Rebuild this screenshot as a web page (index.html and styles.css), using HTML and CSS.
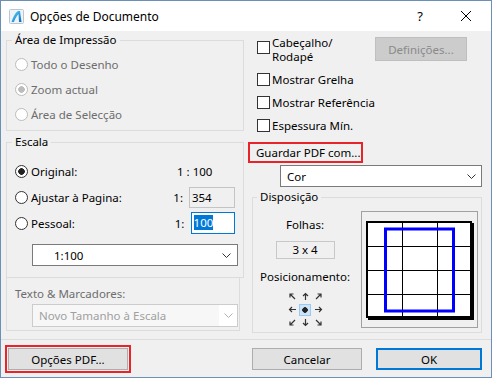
FILE: index.html
```html
<!DOCTYPE html>
<html lang="pt">
<head>
    <meta charset="UTF-8">
    <title>Opções de Documento</title>
    <link rel="stylesheet" href="styles.css">
</head>
<body>
<div class="window">
    <div class="titlebar">
        <svg class="app-icon" width="15" height="15" viewBox="0 0 15 15">
            <defs>
                <linearGradient id="ac" x1="0" y1="0" x2="1" y2="1">
                    <stop offset="0" stop-color="#5fd8f6"/>
                    <stop offset="1" stop-color="#0b68c8"/>
                </linearGradient>
            </defs>
            <rect x="0.5" y="0.5" width="14" height="14" rx="1" fill="#eef3f8" stroke="#bcc6d0"/>
            <path d="M2.5 13 C4 8 6 4 9 2 L11 2 L12.5 13 L10 13 L9.5 5 C7.5 7 6 10 5 13 Z" fill="url(#ac)"/>
        </svg>
        <span class="title">Opções de Documento</span>
        <span class="help">?</span>
        <span class="close">
            <svg width="10" height="10" viewBox="0 0 10 10"><path d="M0 0 L10 10 M10 0 L0 10" stroke="#000" stroke-width="1"/></svg>
        </span>
    </div>

    <div class="main">
        <div class="col-left">
            <fieldset class="group area">
                <legend>Área de Impressão</legend>
                <div class="radio disabled"><span class="rb"></span>Todo o Desenho</div>
                <div class="radio disabled"><span class="rb on"></span>Zoom actual</div>
                <div class="radio disabled"><span class="rb"></span>Área de Selecção</div>
            </fieldset>

            <fieldset class="group escala">
                <legend>Escala</legend>
                <div class="scale-row">
                    <div class="radio"><span class="rb on"></span>Original:</div>
                    <span class="ratio">1 : 100</span>
                </div>
                <div class="scale-row">
                    <div class="radio"><span class="rb"></span>Ajustar à Pagina:</div>
                    <span class="ratio">1:</span>
                    <span class="field readonly">354</span>
                </div>
                <div class="scale-row">
                    <div class="radio"><span class="rb"></span>Pessoal:</div>
                    <span class="ratio">1:</span>
                    <span class="field focused"><span class="sel">100</span></span>
                </div>
                <div class="select scale-select">
                    <span>1:100</span>
                    <svg class="chev" width="9" height="5" viewBox="0 0 9 5"><polyline points="0.5,0.5 4.5,4.5 8.5,0.5" fill="none" stroke="#333"/></svg>
                </div>
            </fieldset>

            <div class="texto">
                <div class="dim">Texto &amp; Marcadores:</div>
                <div class="select disabled text-select">
                    <span>Novo Tamanho à Escala</span>
                    <span class="chev-box">
                        <svg width="9" height="5" viewBox="0 0 9 5"><polyline points="0.5,0.5 4.5,4.5 8.5,0.5" fill="none" stroke="#b0b0b0"/></svg>
                    </span>
                </div>
            </div>
        </div>

        <div class="col-right">
            <div class="header-row">
                <span class="cb"></span>
                <span class="two-line">Cabeçalho/<br>Rodapé</span>
                <button class="btn settings" disabled>Definições...</button>
            </div>
            <div class="check"><span class="cb"></span>Mostrar Grelha</div>
            <div class="check"><span class="cb"></span>Mostrar Referência</div>
            <div class="check"><span class="cb"></span>Espessura Mín.</div>

            <div class="save-as">Guardar PDF com...</div>
            <div class="select color-select">
                <span>Cor</span>
                <svg class="chev" width="9" height="5" viewBox="0 0 9 5"><polyline points="0.5,0.5 4.5,4.5 8.5,0.5" fill="none" stroke="#333"/></svg>
            </div>

            <fieldset class="group disposicao">
                <legend>Disposição</legend>
                <div class="layout-side">
                    <div class="caption">Folhas:</div>
                    <div class="sheets">3 x 4</div>
                    <div class="caption pos-label">Posicionamento:</div>
                    <div class="pos-grid">
                        <span><svg width="9" height="9" viewBox="0 0 9 9"><path d="M7 7 L2 2 M2 5.5 L2 2 L5.5 2" fill="none" stroke="#333" stroke-width="1.2"/></svg></span>
                        <span><svg width="9" height="9" viewBox="0 0 9 9"><path d="M4.5 8 L4.5 1.5 M2 4 L4.5 1.5 L7 4" fill="none" stroke="#333" stroke-width="1.2"/></svg></span>
                        <span><svg width="9" height="9" viewBox="0 0 9 9"><path d="M2 7 L7 2 M3.5 2 L7 2 L7 5.5" fill="none" stroke="#333" stroke-width="1.2"/></svg></span>
                        <span><svg width="9" height="9" viewBox="0 0 9 9"><path d="M8 4.5 L1.5 4.5 M4 2 L1.5 4.5 L4 7" fill="none" stroke="#333" stroke-width="1.2"/></svg></span>
                        <span class="pos-center"><span class="dot"></span></span>
                        <span><svg width="9" height="9" viewBox="0 0 9 9"><path d="M1 4.5 L7.5 4.5 M5 2 L7.5 4.5 L5 7" fill="none" stroke="#333" stroke-width="1.2"/></svg></span>
                        <span><svg width="9" height="9" viewBox="0 0 9 9"><path d="M7 2 L2 7 M2 3.5 L2 7 L5.5 7" fill="none" stroke="#333" stroke-width="1.2"/></svg></span>
                        <span><svg width="9" height="9" viewBox="0 0 9 9"><path d="M4.5 1 L4.5 7.5 M2 5 L4.5 7.5 L7 5" fill="none" stroke="#333" stroke-width="1.2"/></svg></span>
                        <span><svg width="9" height="9" viewBox="0 0 9 9"><path d="M2 2 L7 7 M7 3.5 L7 7 L3.5 7" fill="none" stroke="#333" stroke-width="1.2"/></svg></span>
                    </div>
                </div>
                <div class="preview">
                    <svg width="108" height="99" viewBox="0 0 108 99">
                        <rect x="2" y="2" width="106" height="97" fill="#000"/>
                        <rect x="1" y="1" width="104" height="95" fill="#fff" stroke="#000" stroke-width="2"/>
                        <path d="M36.5 1 V96 M71.5 1 V96 M1 25.5 H105 M1 49.5 H105 M1 73.5 H105" stroke="#000" stroke-width="1"/>
                        <rect x="19.5" y="8" width="68" height="82" fill="none" stroke="#0000ff" stroke-width="3"/>
                    </svg>
                </div>
            </fieldset>
        </div>
    </div>

    <div class="footer">
        <button class="btn pdf-options">Opções PDF...</button>
        <button class="btn cancel">Cancelar</button>
        <button class="btn ok">OK</button>
    </div>
</div>
</body>
</html>
```

FILE: styles.css
```css
* {
    box-sizing: border-box;
}
html, body {
    margin: 0;
    padding: 0;
}
body {
    font-family: "Noto Sans", "Liberation Sans", sans-serif;
    font-size: 11.5px;
    color: #000;
    background: #f0f0f0;
}
.window {
    width: 492px;
    height: 378px;
    border: 1px solid #6b8fb5;
    background: #f0f0f0;
    display: flex;
    flex-direction: column;
}

/* title bar */
.titlebar {
    height: 30px;
    background: #fff;
    display: flex;
    align-items: center;
    padding-left: 8px;
    padding-right: 2px;
    font-size: 12px;
}
.app-icon {
    display: block;
}
.title {
    margin-left: 6px;
}
.help {
    margin-left: auto;
    width: 46px;
    text-align: center;
    font-size: 13px;
}
.close {
    width: 46px;
    display: flex;
    justify-content: center;
}

/* main area */
.main {
    display: flex;
    padding: 1px 0 0 5px;
}
.col-left {
    width: 238px;
}
.col-right {
    width: 234px;
    margin-left: 4px;
}
.group {
    margin: 0;
    border: 1px solid #dcdcdc;
    padding: 0 8px;
    min-width: 0;
}
.group legend {
    padding: 0 3px;
    margin-left: -3px;
    line-height: 16px;
}
.area {
    padding: 4px 8px 3px;
}
.escala {
    margin-top: 3px;
    padding: 8px 8px 11px;
}
.radio {
    display: flex;
    align-items: center;
    height: 25px;
}
.radio.disabled {
    color: #6d6d6d;
}
.rb {
    width: 13px;
    height: 13px;
    border: 1px solid #333;
    border-radius: 50%;
    background: #fff;
    margin-right: 3px;
    flex: none;
}
.rb.on {
    background: radial-gradient(circle, #222 0 3px, #fff 3.6px);
}
.disabled .rb {
    border-color: #bcbcbc;
}
.disabled .rb.on {
    background: radial-gradient(circle, #bcbcbc 0 3px, #fff 3.6px);
}
.scale-row {
    display: flex;
    align-items: center;
    height: 26px;
}
.scale-row .radio {
    width: 162px;
}
.ratio {
    width: 16px;
    white-space: nowrap;
}
.field {
    width: 47px;
    height: 21px;
    line-height: 19px;
    padding-left: 2px;
    border: 1px solid #c4c4c4;
}
.field.focused {
    border-color: #0078d7;
    background: #fff;
    width: 45px;
    height: 22px;
}
.sel {
    background: #0078d7;
    color: #fff;
}
.select {
    display: flex;
    align-items: center;
    height: 22px;
    border: 1px solid #7a7a7a;
    background: #fff;
}
.select .chev {
    margin-left: auto;
    margin-right: 6px;
}
.scale-select {
    margin: 8px 0 0 17px;
    width: 206px;
    padding-left: 21px;
}
.texto {
    border: 1px solid #dcdcdc;
    border-top: none;
    margin-right: 4px;
    padding: 8px 0 3px 8px;
}
.dim {
    color: #6d6d6d;
    line-height: 16px;
}
.text-select {
    margin: 2px 0 0 17px;
    width: 206px;
    height: 23px;
    padding-left: 6px;
    border-color: #cccccc;
    background: #f7f7f7;
    color: #a0a0a0;
}
.chev-box {
    margin-left: auto;
    width: 18px;
    height: 21px;
    background: #fff;
    display: flex;
    align-items: center;
    justify-content: center;
}

/* right column */
.header-row {
    display: flex;
    align-items: flex-start;
    margin-top: 4px;
    padding-left: 9px;
}
.header-row .cb {
    margin-top: 5px;
}
.two-line {
    line-height: 14px;
}
.cb {
    width: 13px;
    height: 13px;
    border: 1px solid #333;
    background: #fff;
    margin-right: 2px;
    flex: none;
}
.check {
    display: flex;
    align-items: center;
    height: 23px;
    padding-left: 9px;
}
.header-row + .check {
    margin-top: 4px;
}
.btn {
    font: inherit;
    color: #000;
    height: 22px;
    padding: 0;
    border: 1px solid #adadad;
    background: #e1e1e1;
}
.settings {
    margin: 1px 15px 0 auto;
    width: 92px;
    height: 24px;
    background: #cccccc;
    border-color: #bfbfbf;
    color: #8a8a8a;
}
.save-as {
    margin-top: 5px;
    width: 115px;
    height: 21px;
    line-height: 17px;
    padding-left: 6px;
    border: 2px solid #e8232a;
    white-space: nowrap;
}
.color-select {
    margin: 2px 0 0 32px;
    width: 202px;
    padding-left: 6px;
}
.color-select .chev {
    margin-right: 5px;
}
.disposicao {
    margin: 2px 0 0 4px;
    width: 230px;
    padding: 0 2px 3px 0;
    display: flex;
}
.disposicao legend {
    margin-left: 4px;
}
.layout-side {
    width: 104px;
    padding-top: 12px;
    text-align: center;
}
.caption {
    line-height: 16px;
}
.sheets {
    width: 59px;
    height: 18px;
    line-height: 16px;
    margin: 8px auto 0;
    border: 1px solid #c8c8c8;
}
.pos-label {
    margin-top: 10px;
}
.pos-grid {
    display: grid;
    grid-template-columns: repeat(3, 13px);
    grid-auto-rows: 13px;
    justify-content: center;
    margin-top: 5px;
}
.pos-grid > span {
    display: flex;
    align-items: center;
    justify-content: center;
}
.pos-center .dot {
    width: 12px;
    height: 12px;
    border: 1px solid #99c9ef;
    background: radial-gradient(circle, #222 0 2.5px, #cce4f7 3px);
}
.preview {
    width: 117px;
    height: 117px;
    margin: 6px 0 0 4px;
    border: 1px solid #a0a0a0;
    padding: 9px 0 0 4px;
}
.preview svg {
    display: block;
}

/* footer */
.footer {
    margin-top: 6px;
    border-top: 1px solid #dcdcdc;
    padding: 8px 0 0 7px;
    display: flex;
}
.pdf-options {
    width: 120px;
    outline: 2px solid #e8232a;
    outline-offset: 1px;
}
.cancel {
    width: 110px;
    margin-left: 124px;
}
.ok {
    width: 106px;
    margin-left: 14px;
    border: 2px solid #0078d7;
}
```
